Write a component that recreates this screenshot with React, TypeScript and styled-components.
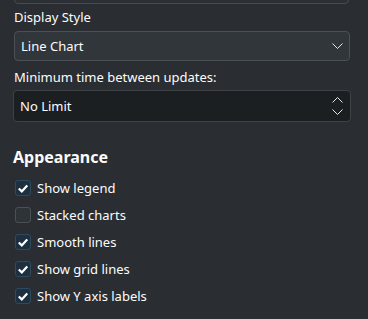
import styled, { createGlobalStyle } from "styled-components";

const GlobalStyle = createGlobalStyle`
  html, body {
    margin: 0;
    padding: 0;
    background: #2a2e32;
  }
  body {
    font-family: "Noto Sans", "DejaVu Sans", sans-serif;
    font-size: 13px;
    color: #fcfcfc;
  }
`;

const Page = styled.div`
  width: 368px;
  height: 319px;
  overflow: hidden;
  box-sizing: border-box;
  padding: 0 18px 0 14px;
  display: flex;
  flex-direction: column;
`;

const PrevBox = styled.div`
  height: 20px;
  margin-top: -18px;
  margin-right: 1px;
  border: 1px solid #464b51;
  border-radius: 4px;
  background: #2c3035;
`;

const Label = styled.div<{ $top: number }>`
  margin-top: ${(p) => p.$top}px;
  line-height: 18px;
`;

const Combo = styled.div`
  margin-top: 5px;
  height: 30px;
  box-sizing: border-box;
  border: 1px solid #4b5056;
  border-radius: 4px;
  background: #31363b;
  display: flex;
  align-items: center;
  justify-content: space-between;
  padding: 0 6px 0 6px;
`;

const Spin = styled(Combo)`
  margin-top: 4px;
  margin-left: -1px;
  margin-right: -1px;
  height: 32px;
  background: #1c1f22;
  border-color: #3e4247;
`;

const Heading = styled.div`
  margin-top: 25px;
  font-weight: bold;
  font-size: 16px;
  line-height: 20px;
  margin-left: -1px;
`;

const List = styled.div`
  margin-top: 13px;
  display: flex;
  flex-direction: column;
  gap: 11px;
`;

const Row = styled.label`
  display: flex;
  align-items: center;
  gap: 6px;
  height: 16px;
  padding-left: 1px;
`;

const Box = styled.span<{ $on: boolean }>`
  width: 16px;
  height: 16px;
  box-sizing: border-box;
  border-radius: 3px;
  border: 1px solid ${(p) => (p.$on ? "#2e4a5e" : "#4b5056")};
  background: ${(p) => (p.$on ? "#1e3040" : "#2e3338")};
  display: flex;
  align-items: center;
  justify-content: center;
`;

const Chevron = ({ up }: { up?: boolean }) => (
  <svg width="11" height="6" viewBox="0 0 11 6" fill="none">
    <path
      d={up ? "M0.5 5.5 L5.5 0.5 L10.5 5.5" : "M0.5 0.5 L5.5 5.5 L10.5 0.5"}
      stroke="#e6e7e8"
      strokeWidth="1"
    />
  </svg>
);

const Arrows = styled.div`
  display: flex;
  flex-direction: column;
  gap: 6px;
  margin-right: 1px;
`;

const Check = () => (
  <svg width="10" height="9" viewBox="0 0 10 9" fill="none">
    <path d="M0.8 4.5 L3.8 7.4 L9.2 1.4" stroke="#ffffff" strokeWidth="2.2" />
  </svg>
);

const options = [
  { text: "Show legend", on: true },
  { text: "Stacked charts", on: false },
  { text: "Smooth lines", on: true },
  { text: "Show grid lines", on: true },
  { text: "Show Y axis labels", on: true },
];

export default function App() {
  return (
    <Page>
      <GlobalStyle />
      <PrevBox />
      <Label $top={4}>Display Style</Label>
      <Combo>
        <span>Line Chart</span>
        <Chevron />
      </Combo>
      <Label $top={7}>Minimum time between updates:</Label>
      <Spin>
        <span>No Limit</span>
        <Arrows>
          <Chevron up />
          <Chevron />
        </Arrows>
      </Spin>
      <Heading>Appearance</Heading>
      <List>
        {options.map((o) => (
          <Row key={o.text}>
            <Box $on={o.on}>{o.on && <Check />}</Box>
            <span>{o.text}</span>
          </Row>
        ))}
      </List>
    </Page>
  );
}
